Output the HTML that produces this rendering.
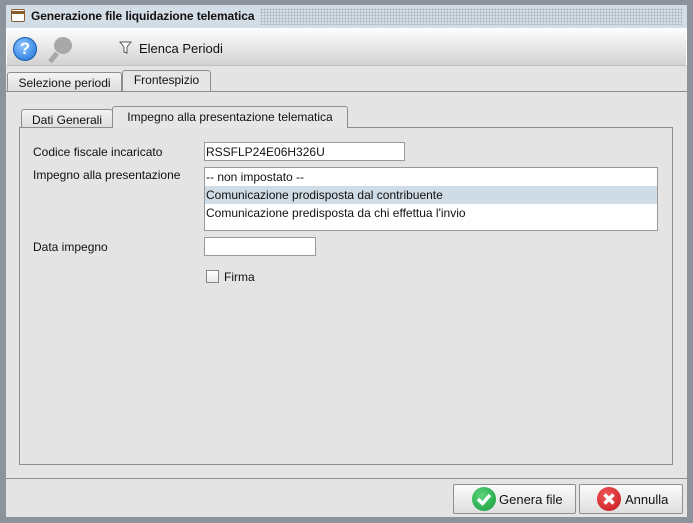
<!DOCTYPE html><html><head><style>
*{margin:0;padding:0;box-sizing:border-box}
body{width:693px;height:523px;background:#8c939a;font-family:"Liberation Sans",sans-serif;font-size:12px;color:#111;position:relative;overflow:hidden}
.a{position:absolute}
.tab{position:absolute;border:1px solid #8e8e8e;border-bottom:none;border-radius:3px 3px 0 0;background:linear-gradient(#f4f4f4,#dcdcdc);text-align:center}
.btn{position:absolute;border:1px solid #8e8e8e;border-radius:2px;background:linear-gradient(#fbfbfb,#dedede);font-size:13px}
</style></head><body>
<div class="a" style="left:6px;top:5px;width:681px;height:512px;background:#e4e4e4"></div>
<div class="a" style="left:6px;top:5px;width:681px;height:23px;background:#d3dde6"></div>
<div class="a" style="left:260px;top:8px;width:422px;height:17px;background-image:radial-gradient(#a9b4bf 0.8px,transparent 1px);background-size:3px 3px"></div>
<div class="a" style="left:11px;top:9px;width:14px;height:13px;border:1.5px solid #8a5a30;border-radius:2px;background:#fff"><div style="height:3px;background:#8a5a30;margin-top:1px"></div></div>
<div class="a" style="left:31px;top:9px;font-weight:bold;font-size:12px;letter-spacing:-0.1px">Generazione file liquidazione telematica</div>
<div class="a" style="left:6px;top:28px;width:681px;height:38px;background:linear-gradient(#fdfdfd,#d2d2d2);border:1px solid #fff;border-bottom:1px solid #c0c0c0"></div>
<div class="a" style="left:13px;top:37px;width:24px;height:24px;border-radius:50%;background:radial-gradient(circle at 40% 35%,#8cc6ff,#1a6fd8);border:1px solid #1859b0;color:#fff;font-weight:bold;font-size:17px;text-align:center;line-height:22px">?</div>
<div class="a" style="left:54px;top:37px;width:18px;height:17px;border-radius:50%;background:#a8a8a8"></div>
<div class="a" style="left:51px;top:52px;width:5px;height:11px;background:#a8a8a8;transform:rotate(40deg)"></div>
<svg class="a" style="left:119px;top:41px" width="13" height="14"><path d="M1 1H12L8 6V12L5 11V6Z" fill="#fff" stroke="#555"/></svg>
<div class="a" style="left:139px;top:41px;font-size:13px">Elenca Periodi</div>
<div class="tab" style="left:7px;top:72px;width:115px;height:20px;padding-top:3px">Selezione periodi</div>
<div class="tab" style="left:122px;top:70px;width:89px;height:22px;padding-top:2px;background:#e6e6e6">Frontespizio</div>
<div class="a" style="left:6px;top:91px;width:681px;height:388px;border-top:1px solid #8e8e8e;border-bottom:1px solid #8e8e8e"></div>
<div class="tab" style="left:21px;top:109px;width:92px;height:19px;padding-top:3px">Dati Generali</div>
<div class="tab" style="left:112px;top:106px;width:236px;height:22px;padding-top:3px;background:#e6e6e6">Impegno alla presentazione telematica</div>
<div class="a" style="left:19px;top:127px;width:654px;height:338px;border:1px solid #8e8e8e;border-top:1px solid #8e8e8e"></div>
<div class="a" style="left:113px;top:127px;width:234px;height:2px;background:#e6e6e6"></div>
<div class="a" style="left:33px;top:145px">Codice fiscale incaricato</div>
<div class="a" style="left:204px;top:142px;width:201px;height:19px;border:1px solid #999;background:#fff;padding:2px 1px">RSSFLP24E06H326U</div>
<div class="a" style="left:33px;top:168px">Impegno alla presentazione</div>
<div class="a" style="left:204px;top:167px;width:454px;height:64px;border:1px solid #999;background:#fff;line-height:18px">
<div style="padding-left:1px">-- non impostato --</div>
<div style="padding-left:1px;background:#cfdbe5">Comunicazione prodisposta dal contribuente</div>
<div style="padding-left:1px">Comunicazione predisposta da chi effettua l'invio</div></div>
<div class="a" style="left:33px;top:240px">Data impegno</div>
<div class="a" style="left:204px;top:237px;width:112px;height:19px;border:1px solid #999;background:#fff"></div>
<div class="a" style="left:206px;top:270px;width:13px;height:13px;border:1px solid #888;background:linear-gradient(#fff,#e8e8e8)"></div>
<div class="a" style="left:224px;top:270px">Firma</div>
<div class="btn" style="left:453px;top:484px;width:123px;height:30px"></div>
<div class="a" style="left:472px;top:487px;width:24px;height:24px;border-radius:50%;background:radial-gradient(circle at 40% 35%,#5cd47c,#129a3a)"></div>
<svg class="a" style="left:472px;top:487px" width="24" height="24"><path d="M6 12L10.5 16.5L18 8" stroke="#fff" stroke-width="3.5" fill="none"/></svg>
<div class="a" style="left:499px;top:492px;font-size:13px">Genera file</div>
<div class="btn" style="left:579px;top:484px;width:104px;height:30px"></div>
<div class="a" style="left:597px;top:487px;width:24px;height:24px;border-radius:50%;background:radial-gradient(circle at 40% 35%,#f25a5a,#c4141a)"></div>
<svg class="a" style="left:597px;top:487px" width="24" height="24"><path d="M7.5 7.5L16.5 16.5M16.5 7.5L7.5 16.5" stroke="#fff" stroke-width="3.5"/></svg>
<div class="a" style="left:625px;top:492px;font-size:13px">Annulla</div>
</body></html>
